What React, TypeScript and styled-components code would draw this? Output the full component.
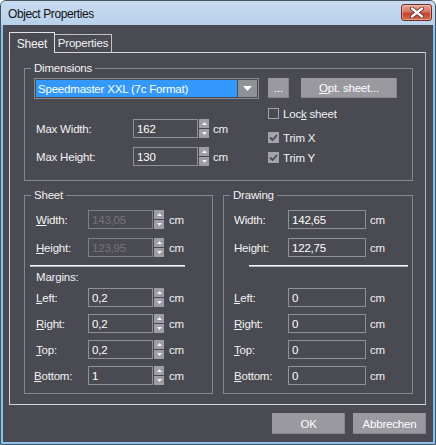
import React from "react";
import styled, { createGlobalStyle } from "styled-components";

const Global = createGlobalStyle`
  html, body { margin: 0; padding: 0; background: #ffffff; }
  body {
    width: 436px; height: 445px; overflow: hidden;
    font-family: "Liberation Sans", Arial, sans-serif;
    font-size: 11px; letter-spacing: -0.2px;
  }
  * { box-sizing: border-box; }
`;

const Window = styled.div`
  width: 436px;
  height: 445px;
  display: flex;
  flex-direction: column;
  border: 1px solid #46525f;
  border-radius: 6px 6px 0 0;
  background: #8cc3ee;
  overflow: hidden;
`;

const TitleBar = styled.div`
  height: 24px;
  flex: none;
  display: flex;
  align-items: flex-start;
  justify-content: space-between;
  padding: 0 3px 0 7px;
  background: linear-gradient(180deg, #c8dcf1 0%, #b8d0ea 100%);
`;

const Title = styled.div`
  margin-top: 6px;
  font-size: 12px;
  letter-spacing: -0.4px;
  color: #111;
`;

const CloseButton = styled.div`
  margin-top: 3px;
  width: 31px;
  height: 17px;
  border: 1px solid #6b2b26;
  border-radius: 3px;
  background: linear-gradient(180deg, #e9a698 0%, #d77463 45%, #c4432f 55%, #cf6a4e 100%);
  display: flex;
  align-items: center;
  justify-content: center;
  box-shadow: inset 0 0 0 1px rgba(255, 210, 200, 0.5);
`;

const Client = styled.div`
  flex: 1;
  margin: 0 2px 2px 2px;
  background: #4a4a52;
  display: flex;
  flex-direction: column;
  padding: 7px 7px 8px 6px;
  color: #f2f2f2;
`;

const TabStrip = styled.div`
  height: 20px;
  flex: none;
  display: flex;
  align-items: flex-end;
  position: relative;
  z-index: 1;
`;

const Tab = styled.div<{ $active?: boolean }>`
  display: flex;
  align-items: center;
  justify-content: center;
  background: #4a4a52;
  border: 1px solid ${(p) => (p.$active ? "#e2e2e4" : "#c2c2c6")};
  border-bottom: none;
  ${(p) =>
    p.$active
      ? `height: 21px; margin-bottom: -1px; width: 46px; padding-top: 2px; font-size: 12px;`
      : `height: 18px; width: 57px; border-left: none; padding-bottom: 2px; font-size: 11.5px;`}
`;

const Panel = styled.div`
  flex: 1;
  border: 1px solid #d6d6da;
  border-right-color: #b8b8bc;
  display: flex;
  flex-direction: column;
  padding: 8px 12px 0 14px;
`;

const GroupBox = styled.fieldset<{ $pad: string }>`
  margin: 0;
  min-width: 0;
  border: 1px solid #86868d;
  padding: ${(p) => p.$pad};
`;

const Legend = styled.legend<{ $ml: number }>`
  padding: 0 3px;
  margin-left: ${(p) => p.$ml}px;
  line-height: 14px;
  height: 14px;
  font-size: 11.5px;
`;

const ComboRow = styled.div`
  display: flex;
  align-items: flex-start;
`;

const Combo = styled.div`
  width: 225px;
  height: 21px;
  border: 1px solid #8a8a90;
  padding: 1px;
  display: flex;
`;

const ComboValue = styled.div`
  flex: 1;
  background: #3399ff;
  color: #ffffff;
  display: flex;
  align-items: center;
  padding-left: 2px;
  font-size: 11.5px;
`;

const ComboArrow = styled.div`
  width: 19px;
  margin-left: 1px;
  background: #909097;
  display: flex;
  align-items: center;
  justify-content: center;
`;

const Button = styled.div<{ $w: number; $h: number; $ml?: number }>`
  width: ${(p) => p.$w}px;
  height: ${(p) => p.$h}px;
  margin-left: ${(p) => p.$ml ?? 0}px;
  background: #99999f;
  box-shadow: inset -1px -1px 0 #85858b;
  color: #ffffff;
  display: flex;
  align-items: center;
  justify-content: center;
  font-size: 11.5px;
`;

const SettingsRow = styled.div`
  display: flex;
`;

const FieldColumn = styled.div<{ $w?: number; $pt?: number; $gap: number }>`
  ${(p) => (p.$w ? `width: ${p.$w}px;` : "")}
  padding-top: ${(p) => p.$pt ?? 0}px;
  display: flex;
  flex-direction: column;
  gap: ${(p) => p.$gap}px;
`;

const CheckColumn = styled.div`
  display: flex;
  flex-direction: column;
`;

const CheckRow = styled.div<{ $mt: number }>`
  margin-top: ${(p) => p.$mt}px;
  height: 13px;
  display: flex;
  align-items: center;
  gap: 4px;
  font-size: 11.5px;
`;

const CheckBox = styled.div<{ $checked?: boolean }>`
  width: 11px;
  height: 11px;
  border: 1px solid #a2a2a8;
  background: ${(p) => (p.$checked ? "#a4a4aa" : "transparent")};
  display: flex;
  align-items: center;
  justify-content: center;
`;

const FieldRow = styled.div`
  height: 19px;
  display: flex;
  align-items: center;
`;

const FieldLabel = styled.div<{ $w: number; $indent?: number }>`
  width: ${(p) => p.$w}px;
  padding-left: ${(p) => Math.max(p.$indent ?? 0, 0)}px;
  margin-left: ${(p) => Math.min(p.$indent ?? 0, 0)}px;
  font-size: 11.5px;
`;

const TextBox = styled.div<{ $w: number; $disabled?: boolean }>`
  width: ${(p) => p.$w}px;
  height: 19px;
  border: 1px solid ${(p) => (p.$disabled ? "#7e7e84" : "#909096")};
  color: ${(p) => (p.$disabled ? "#75757b" : "#ffffff")};
  display: flex;
  align-items: center;
  padding-left: 3px;
  font-size: 11.5px;
`;

const Spinner = styled.div`
  width: 10px;
  height: 19px;
  margin-left: 1px;
  display: flex;
  flex-direction: column;
  gap: 1px;
`;

const SpinButton = styled.div`
  flex: 1;
  background: #9d9da3;
  display: flex;
  align-items: center;
  justify-content: center;
`;

const Unit = styled.div<{ $ml: number }>`
  margin-left: ${(p) => p.$ml}px;
  font-size: 11.5px;
`;

const LowerGrid = styled.div`
  margin-top: 7px;
  display: grid;
  grid-template-columns: 189px 190px;
  column-gap: 10px;
`;

const GroupContent = styled.div`
  display: flex;
  flex-direction: column;
`;

const Separator = styled.div<{ $ml: number; $w: number }>`
  margin-top: 8px;
  margin-left: ${(p) => p.$ml}px;
  width: ${(p) => p.$w}px;
  height: 2px;
  border-top: 1px solid #f4f4f4;
  border-bottom: 1px solid #b8b8bc;
`;

const SubLabel = styled.div`
  margin-top: 3px;
  height: 14px;
  line-height: 14px;
  font-size: 11.5px;
`;

const MarginRows = styled.div`
  margin-top: 4px;
  display: flex;
  flex-direction: column;
  gap: 7px;
`;

const Footer = styled.div`
  margin-top: 8px;
  display: flex;
  justify-content: flex-end;
  gap: 8px;
`;

const U = styled.span`
  text-decoration: underline;
  text-underline-offset: 1px;
`;

const Up = () => (
  <svg width="5" height="3" viewBox="0 0 5 3">
    <path d="M0 3 L2.5 0 L5 3 Z" fill="#f4f4f4" />
  </svg>
);
const Down = () => (
  <svg width="5" height="3" viewBox="0 0 5 3">
    <path d="M0 0 L2.5 3 L5 0 Z" fill="#f4f4f4" />
  </svg>
);

const Spin = () => (
  <Spinner>
    <SpinButton>
      <Up />
    </SpinButton>
    <SpinButton>
      <Down />
    </SpinButton>
  </Spinner>
);

const Check = () => (
  <svg width="9" height="9" viewBox="0 0 9 9">
    <path d="M1 4.5 L3.5 7 L8 2" fill="none" stroke="#4a4a52" strokeWidth="1.8" />
  </svg>
);

type Item = { label: React.ReactNode; value: string; indent?: number };

const sheetSizes: Item[] = [
  { label: <><U>W</U>idth:</>, value: "143,05" },
  { label: <><U>H</U>eight:</>, value: "123,95" },
];
const margins: Item[] = [
  { label: <><U>L</U>eft:</>, value: "0,2" },
  { label: <><U>R</U>ight:</>, value: "0,2" },
  { label: <><U>T</U>op:</>, value: "0,2" },
  { label: <><U>B</U>ottom:</>, value: "1", indent: -2 },
];
const drawingSizes: Item[] = [
  { label: "Width:", value: "142,65" },
  { label: "Height:", value: "122,75" },
];
const drawingMargins: Item[] = [
  { label: <><U>L</U>eft:</>, value: "0" },
  { label: <><U>R</U>ight:</>, value: "0" },
  { label: <><U>T</U>op:</>, value: "0" },
  { label: <><U>B</U>ottom:</>, value: "0" },
];

const SheetRow = ({ item, disabled }: { item: Item; disabled?: boolean }) => (
  <FieldRow>
    <FieldLabel $w={52 - (item.indent ?? 0)} $indent={item.indent}>
      {item.label}
    </FieldLabel>
    <TextBox $w={65} $disabled={disabled}>
      {item.value}
    </TextBox>
    <Spin />
    <Unit $ml={5}>cm</Unit>
  </FieldRow>
);

const DrawingRow = ({ item }: { item: Item }) => (
  <FieldRow>
    <FieldLabel $w={54}>{item.label}</FieldLabel>
    <TextBox $w={78}>{item.value}</TextBox>
    <Unit $ml={4}>cm</Unit>
  </FieldRow>
);

export default function App() {
  return (
    <>
      <Global />
      <Window>
        <TitleBar>
          <Title>Object Properties</Title>
          <CloseButton>
            <svg width="14" height="11" viewBox="0 0 14 11">
              <path
                d="M2 1.5 L12 9.5 M12 1.5 L2 9.5"
                stroke="#5a2620"
                strokeWidth="4"
                strokeLinecap="round"
              />
              <path
                d="M2 1.5 L12 9.5 M12 1.5 L2 9.5"
                stroke="#ffffff"
                strokeWidth="2.4"
                strokeLinecap="round"
              />
            </svg>
          </CloseButton>
        </TitleBar>
        <Client>
          <TabStrip>
            <Tab $active>Sheet</Tab>
            <Tab>Properties</Tab>
          </TabStrip>
          <Panel>
            <GroupBox $pad="3px 9px 14px 9px">
              <Legend $ml={-3}>Dimensions</Legend>
              <ComboRow>
                <Combo>
                  <ComboValue>Speedmaster XXL (7c Format)</ComboValue>
                  <ComboArrow>
                    <svg width="9" height="5" viewBox="0 0 9 5">
                      <path d="M0 0 L9 0 L4.5 5 Z" fill="#ffffff" />
                    </svg>
                  </ComboArrow>
                </Combo>
                <Button $w={21} $h={20} $ml={9}>
                  ...
                </Button>
                <Button $w={96} $h={20} $ml={12}>
                  <U>O</U>pt. sheet...
                </Button>
              </ComboRow>
              <SettingsRow>
                <FieldColumn $w={234} $pt={20} $gap={9}>
                  <FieldRow>
                    <FieldLabel $w={99} $indent={2}>
                      Max Width:
                    </FieldLabel>
                    <TextBox $w={65}>162</TextBox>
                    <Spin />
                    <Unit $ml={4}>cm</Unit>
                  </FieldRow>
                  <FieldRow>
                    <FieldLabel $w={99} $indent={2}>
                      Max Height:
                    </FieldLabel>
                    <TextBox $w={65}>130</TextBox>
                    <Spin />
                    <Unit $ml={4}>cm</Unit>
                  </FieldRow>
                </FieldColumn>
                <CheckColumn>
                  <CheckRow $mt={8}>
                    <CheckBox />
                    <span>
                      Loc<U>k</U> sheet
                    </span>
                  </CheckRow>
                  <CheckRow $mt={11}>
                    <CheckBox $checked>
                      <Check />
                    </CheckBox>
                    <span>Trim X</span>
                  </CheckRow>
                  <CheckRow $mt={7}>
                    <CheckBox $checked>
                      <Check />
                    </CheckBox>
                    <span>Trim Y</span>
                  </CheckRow>
                </CheckColumn>
              </SettingsRow>
            </GroupBox>
            <LowerGrid>
              <GroupBox $pad="8px 0 8px 11px">
                <Legend $ml={-5}>Sheet</Legend>
                <GroupContent>
                  <FieldColumn $gap={9}>
                    {sheetSizes.map((it, i) => (
                      <SheetRow key={i} item={it} disabled />
                    ))}
                  </FieldColumn>
                  <Separator $ml={-6} $w={155} />
                  <SubLabel>Margins:</SubLabel>
                  <MarginRows>
                    {margins.map((it, i) => (
                      <SheetRow key={i} item={it} />
                    ))}
                  </MarginRows>
                </GroupContent>
              </GroupBox>
              <GroupBox $pad="8px 0 8px 10px">
                <Legend $ml={-4}>Drawing</Legend>
                <GroupContent>
                  <FieldColumn $gap={9}>
                    {drawingSizes.map((it, i) => (
                      <DrawingRow key={i} item={it} />
                    ))}
                  </FieldColumn>
                  <Separator $ml={15} $w={159} />
                  <SubLabel />
                  <MarginRows>
                    {drawingMargins.map((it, i) => (
                      <DrawingRow key={i} item={it} />
                    ))}
                  </MarginRows>
                </GroupContent>
              </GroupBox>
            </LowerGrid>
          </Panel>
          <Footer>
            <Button $w={73} $h={21}>
              OK
            </Button>
            <Button $w={73} $h={21}>
              Abbrechen
            </Button>
          </Footer>
        </Client>
      </Window>
    </>
  );
}
